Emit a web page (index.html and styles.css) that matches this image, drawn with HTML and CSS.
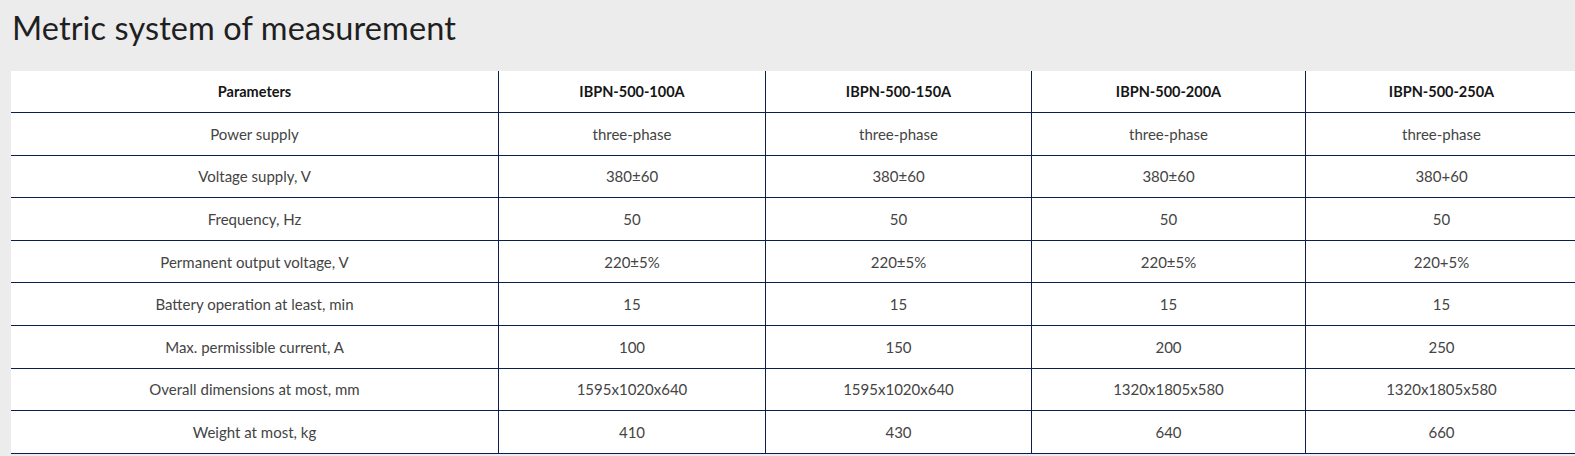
FILE: index.html
```html
<!DOCTYPE html>
<html lang="en">
<head>
<meta charset="utf-8">
<title>Metric system of measurement</title>
<link rel="stylesheet" href="styles.css">
</head>
<body>
<main class="page">
  <h1 class="title">Metric system of measurement</h1>
  <table class="spec">
    <colgroup>
      <col class="c1"><col class="c2"><col class="c3"><col class="c4"><col class="c5">
    </colgroup>
    <thead>
      <tr>
        <th>Parameters</th>
        <th>IBPN-500-100A</th>
        <th>IBPN-500-150A</th>
        <th>IBPN-500-200A</th>
        <th>IBPN-500-250A</th>
      </tr>
    </thead>
    <tbody>
      <tr><td>Power supply</td><td>three-phase</td><td>three-phase</td><td>three-phase</td><td>three-phase</td></tr>
      <tr><td>Voltage supply, V</td><td>380±60</td><td>380±60</td><td>380±60</td><td>380+60</td></tr>
      <tr><td>Frequency, Hz</td><td>50</td><td>50</td><td>50</td><td>50</td></tr>
      <tr><td>Permanent output voltage, V</td><td>220±5%</td><td>220±5%</td><td>220±5%</td><td>220+5%</td></tr>
      <tr><td>Battery operation at least, min</td><td>15</td><td>15</td><td>15</td><td>15</td></tr>
      <tr><td>Max. permissible current, A</td><td>100</td><td>150</td><td>200</td><td>250</td></tr>
      <tr><td>Overall dimensions at most, mm</td><td>1595x1020x640</td><td>1595x1020x640</td><td>1320x1805x580</td><td>1320x1805x580</td></tr>
      <tr><td>Weight at most, kg</td><td>410</td><td>430</td><td>640</td><td>660</td></tr>
    </tbody>
  </table>
</main>
</body>
</html>
```

FILE: styles.css
```css
html {
  overflow: hidden;
}
body {
  margin: 0;
  background: #ececec;
  font-family: Lato, "Open Sans", Arial, sans-serif;
  color: #333;
}
.page {
  padding: 0 0 0 11px;
}
.title {
  margin: 0;
  padding: 8px 0 0 1px;
  height: 71px;
  box-sizing: border-box;
  font-weight: 400;
  font-size: 32.5px;
  line-height: 40px;
  letter-spacing: 0.1px;
  color: #1f1f1f;
}
.spec {
  width: 1566px;
  table-layout: fixed;
  border-collapse: separate;
  border-spacing: 0;
  background: #fff;
}
.c1 { width: 487px; }
.c2 { width: 267px; }
.c3 { width: 266px; }
.c4 { width: 274px; }
.c5 { width: 272px; }
.spec th,
.spec td {
  padding: 0;
  text-align: center;
  vertical-align: middle;
  border-bottom: 1px solid #0b1f4e;
}
.spec th + th,
.spec td + td {
  border-left: 1px solid #0b1f4e;
}
.spec th {
  height: 41px;
  font-size: 14.5px;
  font-weight: 700;
  color: #151515;
}
.spec td {
  height: 41.6px;
  font-size: 15px;
  color: #444;
}
```
